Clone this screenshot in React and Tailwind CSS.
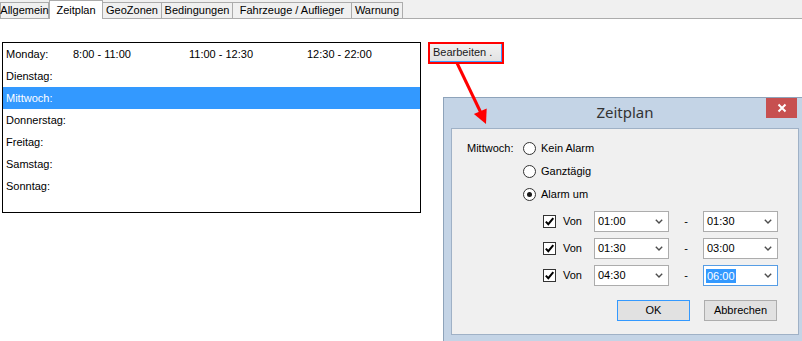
import React from "react";

const tabs = [
  { label: "Allgemein", w: "w-[49px]" },
  { label: "Zeitplan", w: "w-[54px]", active: true },
  { label: "GeoZonen", w: "w-[60px]" },
  { label: "Bedingungen", w: "w-[72px]" },
  { label: "Fahrzeuge / Auflieger", w: "w-[120px]" },
  { label: "Warnung", w: "w-[52px]" },
];

const days = [
  { day: "Monday:", times: ["8:00 - 11:00", "11:00 - 12:30", "12:30 - 22:00"] },
  { day: "Dienstag:" },
  { day: "Mittwoch:", selected: true },
  { day: "Donnerstag:" },
  { day: "Freitag:" },
  { day: "Samstag:" },
  { day: "Sonntag:" },
];

const ranges = [
  ["01:00", "01:30"],
  ["01:30", "03:00"],
  ["04:30", "06:00"],
];

function Chevron() {
  return (
    <svg width="8" height="5" viewBox="0 0 8 5" className="shrink-0">
      <path d="M0.8 0.8 L4 4 L7.2 0.8" fill="none" stroke="#4d4d4d" strokeWidth="1.4" />
    </svg>
  );
}

function Combo({ value, focused }) {
  return (
    <div
      className={`flex items-center justify-between w-[75px] h-[21px] bg-white border pl-[2px] pr-[5px] ${
        focused ? "border-[#569de5]" : "border-[#acacac]"
      }`}
    >
      {focused ? (
        <span className="bg-[#3399ff] text-white leading-[14px] px-[1px]">{value}</span>
      ) : (
        <span className="px-[1px]">{value}</span>
      )}
      <Chevron />
    </div>
  );
}

function Radio({ checked }) {
  return (
    <span className="flex items-center justify-center w-[13px] h-[13px] rounded-full border border-[#333] bg-white">
      {checked && <span className="w-[5px] h-[5px] rounded-full bg-[#1a1a1a]" />}
    </span>
  );
}

function CheckBox() {
  return (
    <span className="flex items-center justify-center w-[13px] h-[13px] border border-[#333] bg-white">
      <svg width="11" height="11" viewBox="0 0 11 11">
        <path d="M1.8 5.6 L4.3 8.2 L9.3 2.2" fill="none" stroke="#000" strokeWidth="2" />
      </svg>
    </span>
  );
}

export default function App() {
  return (
    <div className="relative w-[802px] h-[341px] overflow-hidden bg-white text-black text-[11px] font-['Liberation_Sans',Arial,sans-serif]">
      {/* Tab strip */}
      <div className="flex items-end h-[19px] bg-[#f0f0f0] border-b border-[#acacac]">
        {tabs.map((t) =>
          t.active ? (
            <div
              key={t.label}
              className={`relative z-10 ${t.w} h-[19px] -mb-[1px] bg-white border-x border-t border-[#acacac] flex items-start justify-center pt-[1px]`}
            >
              {t.label}
            </div>
          ) : (
            <div
              key={t.label}
              className={`${t.w} h-[16px] bg-[#f0f0f0] border-l border-t border-r border-[#acacac] -ml-[1px] first:ml-0 flex items-center justify-center`}
            >
              {t.label}
            </div>
          )
        )}
      </div>

      {/* Content */}
      <div className="flex items-start mt-[23px] ml-[2px]">
        <div className="w-[419px] h-[171px] border border-black">
          {days.map((d) => (
            <div
              key={d.day}
              className={`flex items-center h-[22px] pl-[3px] ${
                d.selected ? "bg-[#3399ff] text-white" : ""
              }`}
            >
              <span className="w-[67px]">{d.day}</span>
              {d.times && (
                <>
                  <span className="w-[116px]">{d.times[0]}</span>
                  <span className="w-[118px]">{d.times[1]}</span>
                  <span>{d.times[2]}</span>
                </>
              )}
            </div>
          ))}
        </div>

        <div className="ml-[7px] mt-[0px] w-[76px] h-[22px] border-2 border-[#ff0000]">
          <div className="h-full bg-gradient-to-b from-[#f2f2f2] to-[#e2e2e2] border-r border-b border-[#3c9bff] flex items-center pl-[3px] text-[#1a1a1a]">
            Bearbeiten .
          </div>
        </div>
      </div>

      {/* Dialog window */}
      <div className="absolute left-[443px] top-[97px] w-[364px] h-[250px] bg-[#c4d4e6] border border-[#8ea3ba] flex flex-col">
        <div className="relative h-[30px] flex items-center justify-center">
          <span className="text-[15px] text-[#333] font-['Noto_Sans','Open_Sans',sans-serif] -mt-[1px]">
            Zeitplan
          </span>
          <div className="absolute top-0 right-[9px] w-[31px] h-[20px] bg-[#c75050] flex items-center justify-center">
            <svg width="10" height="10" viewBox="0 0 10 10">
              <path d="M1.5 1.5 L8.5 8.5 M8.5 1.5 L1.5 8.5" stroke="#fff" strokeWidth="2" />
            </svg>
          </div>
        </div>

        <div className="mx-[7px] h-[207px] bg-[#f0f0f0] border border-[#9fb1c6] pl-[15px] pt-[8px]">
          <div className="flex">
            <span className="w-[56px] h-[23px] flex items-center">Mittwoch:</span>
            <div className="flex flex-col">
              {[
                ["Kein Alarm", false],
                ["Ganztägig", false],
                ["Alarm um", true],
              ].map(([label, checked]) => (
                <div key={label} className="flex items-center h-[23px] gap-[5px]">
                  <Radio checked={checked} />
                  <span>{label}</span>
                </div>
              ))}
            </div>
          </div>

          <div className="flex flex-col mt-[2px] ml-[76px]">
            {ranges.map(([from, to], i) => (
              <div key={i} className="flex items-center h-[27px]">
                <CheckBox />
                <span className="ml-[7px] w-[31px]">Von</span>
                <Combo value={from} />
                <span className="w-[34px] text-center">-</span>
                <Combo value={to} focused={i === 2} />
              </div>
            ))}
          </div>

          <div className="flex mt-[11px] ml-[150px] gap-[14px]">
            <div className="w-[73px] h-[21px] bg-[#e1e1e1] border border-[#3399ff] flex items-center justify-center">
              OK
            </div>
            <div className="w-[73px] h-[21px] bg-[#e1e1e1] border border-[#adadad] flex items-center justify-center">
              Abbrechen
            </div>
          </div>
        </div>
      </div>

      {/* Red arrow annotation */}
      <svg className="absolute left-0 top-0 z-20 pointer-events-none" width="802" height="341">
        <line x1="457" y1="63" x2="481" y2="113" stroke="#ff0000" strokeWidth="3" />
        <polygon points="486,124 473.9,114 486.7,108.4" fill="#ff0000" />
      </svg>
    </div>
  );
}
